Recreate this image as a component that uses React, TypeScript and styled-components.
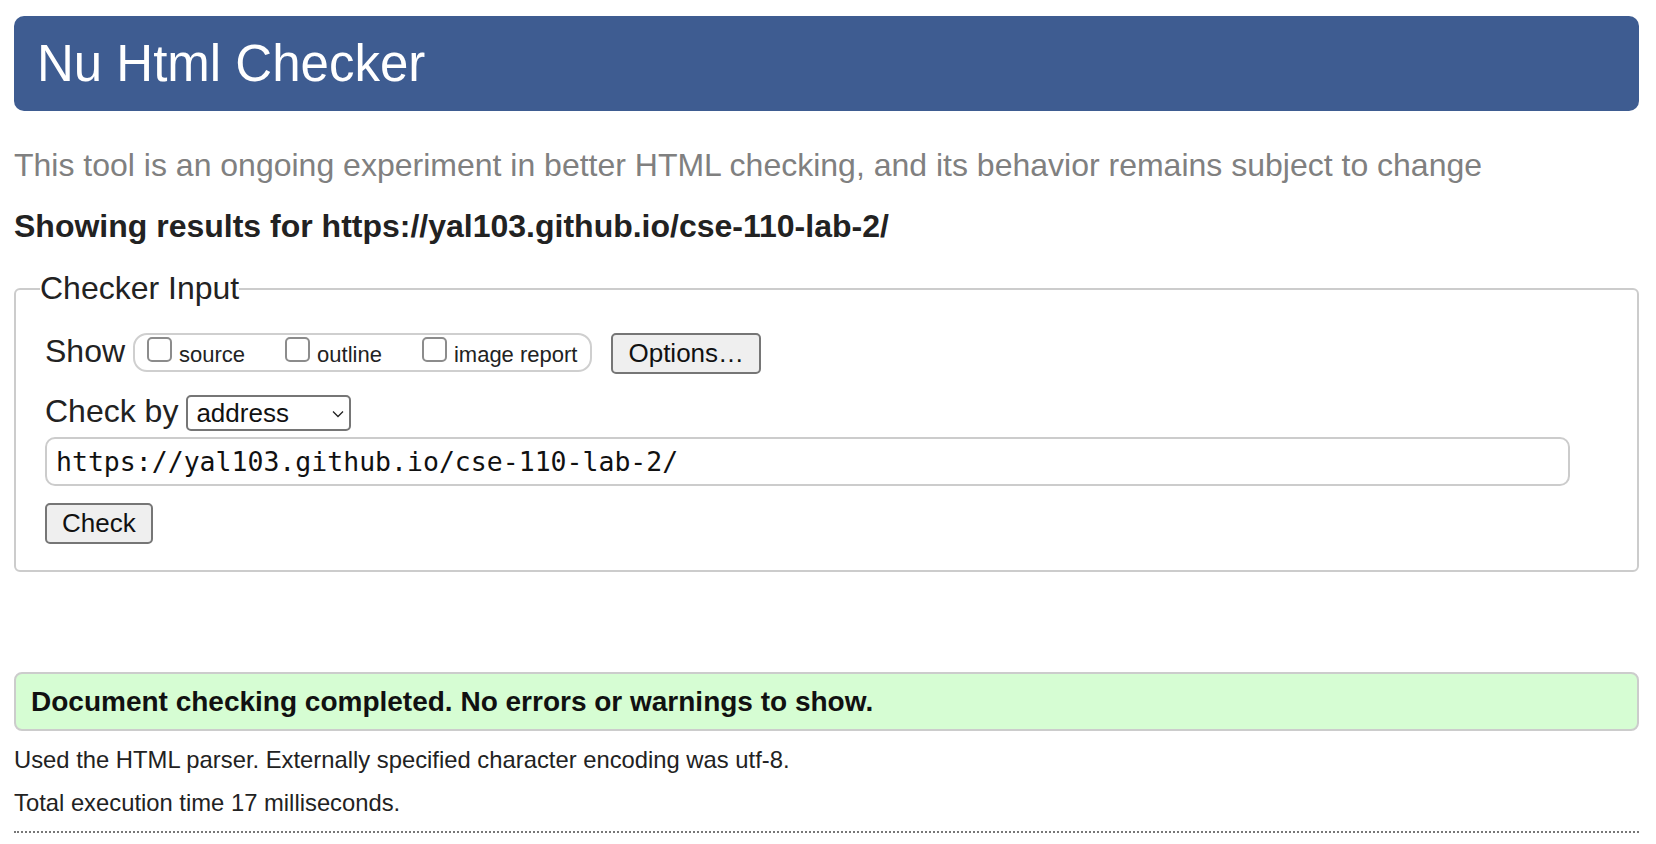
import React from "react";
import styled, { createGlobalStyle } from "styled-components";

const GlobalStyle = createGlobalStyle`
  html, body {
    margin: 0;
    padding: 0;
    background: #ffffff;
  }
  body {
    font-family: "Liberation Sans", Arial, Helvetica, sans-serif;
    color: #222222;
  }
`;

const Page = styled.div`
  padding: 16px 17px 0 14px;
`;

const Header = styled.header`
  height: 95px;
  box-sizing: border-box;
  background: #3e5c91;
  border-radius: 10px;
  display: flex;
  align-items: center;
  padding-left: 23px;
`;

const Title = styled.h1`
  margin: 0;
  font-size: 51px;
  line-height: 60px;
  font-weight: normal;
  color: #ffffff;
`;

const Tagline = styled.p`
  margin: 36px 0 0;
  font-size: 32px;
  line-height: 37px;
  color: #808080;
`;

const ResultsFor = styled.h2`
  margin: 24px 0 0;
  font-size: 32px;
  line-height: 37px;
  font-weight: bold;
  color: #222222;
`;

const InputFieldset = styled.fieldset`
  margin: 25px 0 0;
  padding: 26px 28px 26px 29px;
  border: 2px solid #cccccc;
  border-radius: 6px;
  min-width: 0;
`;

const Legend = styled.legend`
  padding: 0;
  margin-left: -5px;
  font-size: 32px;
  line-height: 37px;
  color: #222222;
`;

const Row = styled.div<{ $top?: number }>`
  display: flex;
  align-items: baseline;
  margin-top: ${(p) => p.$top ?? 0}px;
`;

const RowLabel = styled.span`
  font-size: 32px;
  line-height: 37px;
  color: #222222;
  margin-right: 8px;
`;

const ToggleGroup = styled.div`
  display: inline-flex;
  align-items: baseline;
  gap: 40px;
  height: 39px;
  box-sizing: border-box;
  padding: 2px 13px 0 12px;
  border: 2px solid #cfcfcf;
  border-radius: 14px;
`;

const Toggle = styled.label`
  display: inline-flex;
  align-items: baseline;
  gap: 7px;
  font-size: 22px;
  color: #222222;
`;

const CheckBox = styled.input.attrs({ type: "checkbox" })`
  appearance: none;
  -webkit-appearance: none;
  margin: 0;
  width: 25px;
  height: 25px;
  box-sizing: border-box;
  border: 2px solid #8c8c8c;
  border-radius: 5px;
  background: #ffffff;
`;

const Button = styled.button<{ $left?: number }>`
  margin: 0 0 0 ${(p) => p.$left ?? 0}px;
  padding: 5px 15px 6px;
  font-family: "Liberation Sans", Arial, Helvetica, sans-serif;
  font-size: 26px;
  line-height: 26px;
  color: #111111;
  background: #efefef;
  border: 2px solid #767676;
  border-radius: 5px;
`;

const SelectWrap = styled.span`
  position: relative;
  display: inline-block;
`;

const Select = styled.select`
  appearance: none;
  -webkit-appearance: none;
  width: 165px;
  height: 36px;
  box-sizing: border-box;
  margin: 0;
  padding: 0 0 0 8px;
  font-family: "Liberation Sans", Arial, Helvetica, sans-serif;
  font-size: 26px;
  color: #111111;
  background: #ffffff;
  border: 2px solid #767676;
  border-radius: 5px;
`;

const Chevron = styled.svg`
  position: absolute;
  left: 146px;
  top: 15px;
  width: 12px;
  height: 8px;
  pointer-events: none;
`;

const UrlInput = styled.input`
  display: block;
  width: 97.5%;
  height: 49px;
  box-sizing: border-box;
  margin: 6px 0 0;
  padding: 0 0 0 9px;
  font-family: "DejaVu Sans Mono", Menlo, monospace;
  font-size: 26.5px;
  color: #111111;
  background: #ffffff;
  border: 2px solid #cccccc;
  border-radius: 10px;
  outline: none;
`;

const Success = styled.p`
  margin: 100px 0 0;
  padding: 12px 15px 11px;
  border: 2px solid #cccccc;
  border-radius: 8px;
  background: #d6fdd3;
  font-size: 28px;
  line-height: 32px;
  font-weight: bold;
  color: #111111;
`;

const Info = styled.p`
  margin: 15px 0 0;
  font-size: 23.8px;
  line-height: 28px;
  color: #222222;
`;

const Dotted = styled.hr`
  margin: 14px 0 0;
  height: 0;
  border: none;
  border-top: 2px dotted #777777;
`;

const toggles = ["source", "outline", "image report"];

export default function App() {
  return (
    <>
      <GlobalStyle />
      <Page>
        <Header>
          <Title>Nu Html Checker</Title>
        </Header>
        <Tagline>
          This tool is an ongoing experiment in better HTML checking, and its
          behavior remains subject to change
        </Tagline>
        <ResultsFor>Showing results for https://yal103.github.io/cse-110-lab-2/</ResultsFor>
        <InputFieldset>
          <Legend>Checker Input</Legend>
          <Row>
            <RowLabel>Show</RowLabel>
            <ToggleGroup>
              {toggles.map((t) => (
                <Toggle key={t}>
                  <CheckBox />
                  {t}
                </Toggle>
              ))}
            </ToggleGroup>
            <Button type="button" $left={19}>
              Options…
            </Button>
          </Row>
          <Row $top={19}>
            <RowLabel>Check by</RowLabel>
            <SelectWrap>
              <Select defaultValue="address">
                <option value="address">address</option>
                <option value="file">file upload</option>
                <option value="text">text input</option>
              </Select>
              <Chevron viewBox="0 0 12 8">
                <polyline
                  points="1,1.5 6,6.5 11,1.5"
                  fill="none"
                  stroke="#222"
                  strokeWidth="1.3"
                />
              </Chevron>
            </SelectWrap>
          </Row>
          <UrlInput defaultValue="https://yal103.github.io/cse-110-lab-2/" />
          <Row $top={17}>
            <Button type="button">Check</Button>
          </Row>
        </InputFieldset>
        <Success>Document checking completed. No errors or warnings to show.</Success>
        <Info>Used the HTML parser. Externally specified character encoding was utf-8.</Info>
        <Info>Total execution time 17 milliseconds.</Info>
        <Dotted />
      </Page>
    </>
  );
}
